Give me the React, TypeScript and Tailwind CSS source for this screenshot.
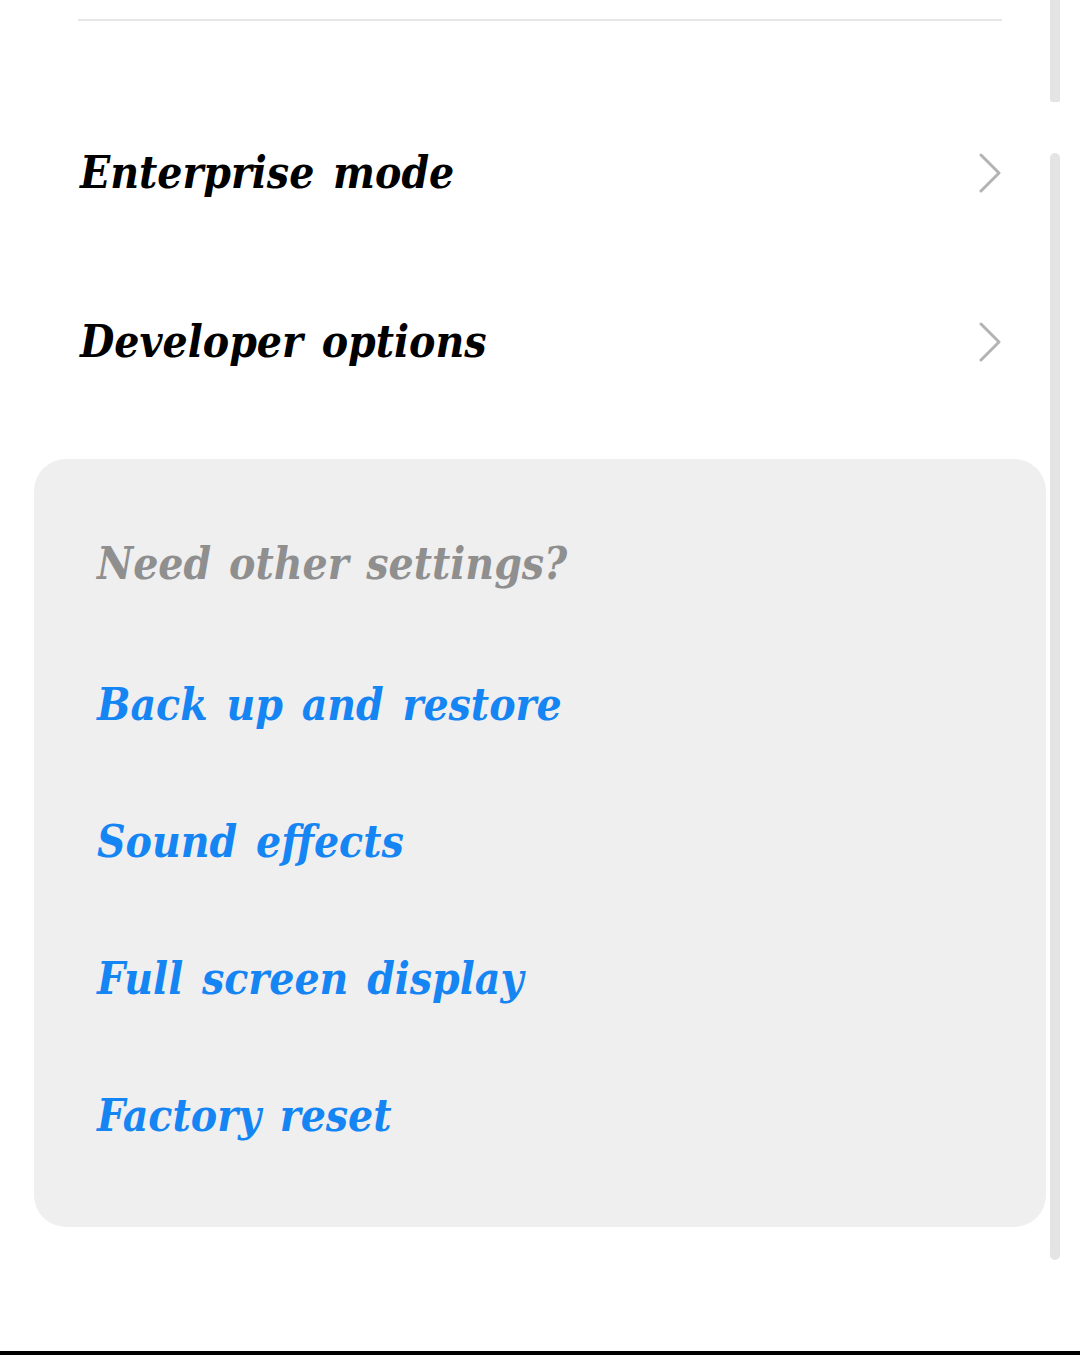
import React from "react";

const font = { fontFamily: '"DejaVu Serif Condensed", "DejaVu Serif", serif' };

function Chevron() {
  return (
    <svg width="24" height="40" viewBox="0 0 24 40" fill="none">
      <path d="M3 2 L21 20 L3 38" stroke="#b3b3b3" strokeWidth="3" strokeLinecap="round" strokeLinejoin="round" />
    </svg>
  );
}

function Row({ label }: { label: string }) {
  return (
    <div className="h-[169px] flex items-center justify-between pl-[80px] pr-[78px]">
      <span className="text-[44px] italic font-bold font-stretch-condensed text-black leading-none [word-spacing:5px]">{label}</span>
      <Chevron />
    </div>
  );
}

export default function App() {
  const links = ["Back up and restore", "Sound effects", "Full screen display", "Factory reset"];
  return (
    <div className="relative w-[1080px] h-[1355px] bg-white overflow-hidden flex flex-col" style={font}>
      <div className="mt-[19px] mx-[78px] h-[2px] bg-[#e6e6e6]" />
      <div className="h-[67px]" />
      <Row label="Enterprise mode" />
      <Row label="Developer options" />
      <div className="mt-[33px] ml-[34px] w-[1012px] h-[768px] rounded-[32px] bg-[#efefef] pl-[63px] pt-[67px] flex flex-col">
        <div className="h-[110px] flex items-start text-[44px] italic font-bold font-stretch-condensed text-[#8f8f8f] leading-none [word-spacing:4px]">
          <span className="mt-[16px]">Need other settings?</span>
        </div>
        {links.map((l) => (
          <div key={l} className="h-[137px] flex items-center text-[44px] italic font-bold font-stretch-condensed text-[#1585f3] leading-none [word-spacing:5px]">
            {l}
          </div>
        ))}
      </div>
      <div className="flex-1" />
      <div className="h-[4px] bg-black" />
      <div className="absolute left-[1050px] top-0 w-[10px] h-[102px] bg-[#e4e4e4] rounded-b-[2px]" />
      <div className="absolute left-[1050px] top-[153px] w-[10px] h-[1107px] bg-[#e4e4e4] rounded-full" />
    </div>
  );
}
